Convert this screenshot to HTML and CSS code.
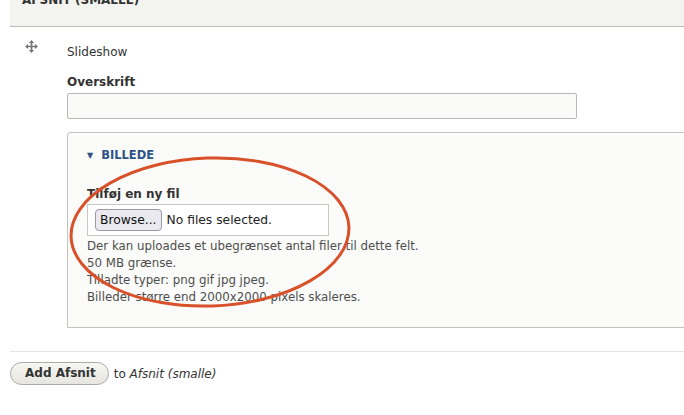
FILE: index.html
```html
<!DOCTYPE html>
<html lang="da">
<head>
  <meta charset="utf-8">
  <title>Afsnit</title>
  <link rel="stylesheet" href="styles.css">
</head>
<body>
  <div class="page">
    <div class="region-head">Afsnit (smalle)</div>

    <div class="row">
      <div class="handle">
        <svg width="13" height="13" viewBox="0 0 12 12">
          <path d="M6 2v8M2 6h8" stroke="#777" stroke-width="1.6"/>
          <path d="M6 0L3.6 2.8H8.4Z M6 12L3.6 9.2H8.4Z M0 6L2.8 3.6V8.4Z M12 6L9.2 3.6V8.4Z" fill="#777"/>
        </svg>
      </div>
      <div class="row-body">
        <div class="type">Slideshow</div>

        <div class="field">
          <label class="label">Overskrift</label>
          <div class="text-input"></div>
        </div>

        <div class="details">
          <div class="summary"><span class="arrow">▼</span>Billede</div>
          <label class="label">Tilføj en ny fil</label>
          <div class="file-box">
            <span class="file-btn">Browse...</span>
            <span class="file-status">No files selected.</span>
          </div>
          <div class="desc">
            Der kan uploades et ubegrænset antal filer til dette felt.<br>
            50 MB grænse.<br>
            Tilladte typer: png gif jpg jpeg.<br>
            Billeder større end 2000x2000 pixels skaleres.
          </div>
        </div>
      </div>
    </div>

    <div class="actions">
      <span class="btn">Add Afsnit</span>
      <span class="to">to <em>Afsnit (smalle)</em></span>
    </div>
  </div>

  <!-- annotation drawn over the form -->
  <svg class="mark" width="684" height="415" viewBox="0 0 684 415">
    <ellipse cx="210" cy="232" rx="139" ry="74" transform="rotate(-2 210 232)" fill="none" stroke="#d9512a" stroke-width="3"/>
  </svg>
</body>
</html>
```

FILE: styles.css
```css
* { box-sizing: border-box; margin: 0; padding: 0; }
body {
  font-family: 'DejaVu Sans', Verdana, sans-serif;
  font-size: 12px;
  line-height: 16px;
  color: #333;
  background: #fff;
  overflow: hidden;
  position: relative;
  width: 684px;
  height: 415px;
}
.page {
  padding-left: 10px;
  margin-right: -30px;
}
/* table header, mostly scrolled out of view */
.region-head {
  margin-top: -8px;
  height: 35px;
  padding-left: 12px;
  background: #f3f3ef;
  border-bottom: 1px solid #bdbdbd;
  font-weight: bold;
  text-transform: uppercase;
}
.row {
  display: flex;
}
.handle {
  width: 57px;
  padding: 13px 0 0 15px;
}
.handle svg { display: block; }
.row-body {
  flex: 1;
  padding-top: 17px;
}
.type { margin-bottom: 14px; }
.label {
  display: block;
  font-weight: bold;
}
.text-input {
  width: 510px;
  height: 26px;
  margin-top: 3px;
  border: 1px solid #b8b8b8;
  border-radius: 2px;
  background: #fafaf8;
}
.details {
  margin-top: 13px;
  border: 1px solid #c2c2c2;
  border-radius: 3px 0 0 0;
  background: #fbfbfa;
  padding: 14px 0 22px 19px;
  height: 196px;
}
.summary {
  font-size: 11.5px;
  font-weight: bold;
  text-transform: uppercase;
  color: #2d5286;
  margin-bottom: 22px;
}
.summary .arrow {
  font-size: 8px;
  margin-right: 8px;
  vertical-align: 1px;
}
.file-box {
  display: flex;
  align-items: center;
  gap: 5px;
  width: 242px;
  height: 32px;
  margin-top: 2px;
  padding-left: 7px;
  border: 1px solid #c8c8c8;
  background: #fff;
  font-size: 12.3px;
}
.file-btn {
  height: 22px;
  line-height: 20px;
  padding: 0 4px;
  border: 1px solid #9a9aa6;
  border-radius: 4px;
  background: #e9e9ef;
  color: #111;
}
.file-status { color: #222; }
.desc {
  margin-top: 2px;
  font-size: 11.8px;
  line-height: 17px;
  color: #4d4d4d;
}
.actions {
  margin-top: 23px;
  border-top: 1px solid #e4e4e4;
  padding-top: 10px;
  display: flex;
  align-items: center;
  gap: 5px;
}
.btn {
  height: 23px;
  line-height: 21px;
  padding: 0 12px 0 14px;
  border: 1px solid #aaa;
  border-radius: 12px;
  background: linear-gradient(#f7f7f3, #e6e5df);
  font-weight: bold;
  color: #333;
}
.to em { font-style: italic; }
.mark {
  position: absolute;
  top: 0;
  left: 0;
  pointer-events: none;
}
```
